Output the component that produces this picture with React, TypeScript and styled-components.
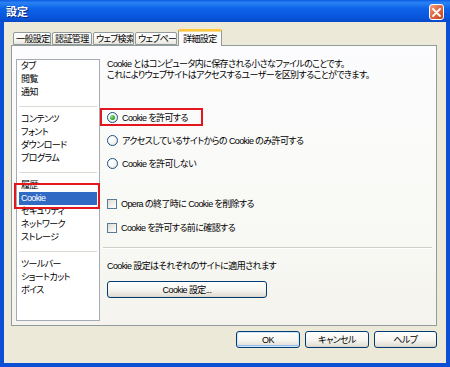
import styled, { createGlobalStyle, css } from "styled-components";

const GlobalStyle = createGlobalStyle`
  html, body {
    margin: 0;
    padding: 0;
    background: #ffffff;
  }
  body {
    font-family: "Liberation Sans", "Noto Sans CJK JP", sans-serif;
    font-feature-settings: "palt";
    letter-spacing: -0.6px;
  }
`;

// red annotation rectangle laid over a part of the dialog
const mark = (t: number, r: number, b: number, l: number) => css`
  position: relative;
  &::after {
    content: "";
    position: absolute;
    top: -${t}px;
    right: -${r}px;
    bottom: -${b}px;
    left: -${l}px;
    border: 2px solid #e3161e;
    pointer-events: none;
    z-index: 5;
  }
`;

const Window = styled.div`
  width: 450px;
  height: 367px;
  display: flex;
  flex-direction: column;
  background: #0a4fd4;
`;

const TitleBar = styled.div`
  height: 22px;
  flex: none;
  display: flex;
  align-items: center;
  justify-content: space-between;
  padding: 0 6px 0 6px;
  background: linear-gradient(#0b5be4 0%, #2a82f4 12%, #0d62e8 40%, #0855dc 80%, #0648c6 100%);
`;

const Title = styled.span`
  color: #ffffff;
  font-family: "Noto Sans CJK JP", sans-serif;
  font-size: 11px;
  font-weight: 700;
  letter-spacing: 0;
  text-shadow: 1px 1px 0 #0a2a7a;
`;

const CloseButton = styled.div`
  width: 13px;
  height: 14px;
  margin-top: 2px;
  border: 1px solid #ffffff;
  border-radius: 3px;
  background: linear-gradient(135deg, #f0a184 0%, #e16a43 45%, #c8411c 100%);
  display: flex;
  align-items: center;
  justify-content: center;
`;

const Client = styled.div`
  flex: 1;
  display: flex;
  flex-direction: column;
  background: #ece9d8;
  border: 4px solid #0a4fd4;
  border-top: none;
  padding: 7px 9px 0 7px;
`;

const TabRow = styled.div`
  height: 16px;
  display: flex;
  align-items: flex-end;
  gap: 1px;
  padding-left: 2px;
  position: relative;
  z-index: 2;
`;

const Tab = styled.div<{ $w: number; $active?: boolean }>`
  width: ${(p) => p.$w}px;
  box-sizing: border-box;
  height: ${(p) => (p.$active ? 17 : 13)}px;
  margin-bottom: ${(p) => (p.$active ? -1 : 0)}px;
  padding-left: 2px;
  display: flex;
  align-items: center;
  overflow: hidden;
  white-space: nowrap;
  font-size: 9px;
  color: #000000;
  border: 1px solid #919b9c;
  border-bottom: ${(p) => (p.$active ? "none" : "1px solid #919b9c")};
  border-radius: 2px 2px 0 0;
  background: ${(p) => (p.$active ? "#fcfcfe" : "linear-gradient(#ffffff, #f3f3ef 70%, #e6e4dc)")};
  ${(p) =>
    p.$active &&
    css`
      border-top: 2px solid #ffc83c;
      box-shadow: inset 0 1px 0 #f8dc8c;
      padding-left: 4px;
      ${mark(7, 5, 3, 3)}
    `}
`;

const Panel = styled.div`
  height: 281px;
  box-sizing: border-box;
  display: flex;
  border: 1px solid #919b9c;
  background: linear-gradient(#fcfcfe, #f8f8f4 70%, #f4f3ee);
  padding: 13px 0 4px 4px;
`;

const List = styled.div`
  width: 84px;
  box-sizing: border-box;
  height: 262px;
  background: #ffffff;
  border: 1px solid #a5acb5;
  padding: 0 2px;
  display: flex;
  flex-direction: column;
`;

const Item = styled.div<{ $selected?: boolean }>`
  height: 13px;
  line-height: 13px;
  padding-left: 2px;
  font-size: 9px;
  white-space: nowrap;
  color: ${(p) => (p.$selected ? "#ffffff" : "#000000")};
  background: ${(p) => (p.$selected ? "#316ac5" : "transparent")};
  ${(p) => p.$selected && mark(9, 3, 4, 5)}
`;

const ListSeparator = styled.div`
  height: 14px;
  display: flex;
  align-items: center;
  &::before {
    content: "";
    flex: 1;
    height: 1px;
    background: #dcdad3;
  }
`;

const Content = styled.div`
  flex: 1;
  display: flex;
  flex-direction: column;
  align-items: flex-start;
  padding: 0 4px 0 7px;
`;

const Description = styled.p`
  margin: 0;
  font-size: 9px;
  line-height: 11px;
  color: #000000;
`;

const OptionRow = styled.label<{ $gap: number; $marked?: boolean }>`
  display: inline-flex;
  align-items: center;
  gap: 4px;
  height: 13px;
  margin-top: ${(p) => p.$gap}px;
  font-size: 9px;
  color: #000000;
  white-space: nowrap;
  ${(p) => p.$marked && mark(3, 15, 2, 7)}
`;

const Radio = styled.span<{ $checked?: boolean }>`
  width: 11px;
  height: 11px;
  box-sizing: border-box;
  border-radius: 50%;
  border: 1px solid #1c5180;
  background: radial-gradient(circle at 35% 35%, #ffffff 30%, #dcdad2 100%);
  display: flex;
  align-items: center;
  justify-content: center;
  &::after {
    content: "";
    display: ${(p) => (p.$checked ? "block" : "none")};
    width: 5px;
    height: 5px;
    border-radius: 50%;
    background: radial-gradient(circle at 35% 35%, #8fe08f, #21a121 70%);
  }
`;

const Check = styled.span`
  width: 10px;
  height: 10px;
  box-sizing: border-box;
  border: 1px solid #5a7a98;
  background: linear-gradient(135deg, #dcdcd7, #ffffff);
`;

const Divider = styled.div`
  align-self: stretch;
  height: 1px;
  margin: 13px 0 0 -4px;
  background: #d0cec6;
  box-shadow: 0 1px 0 #ffffff;
`;

const Note = styled.p`
  margin: 13px 0 0 0;
  font-size: 9px;
  line-height: 11px;
  color: #000000;
`;

const XpButton = styled.button<{ $w: number; $default?: boolean }>`
  width: ${(p) => p.$w}px;
  height: 17px;
  padding: 0;
  font-family: "Liberation Sans", "Noto Sans CJK JP", sans-serif;
  font-feature-settings: "palt";
  letter-spacing: -0.6px;
  font-size: 9px;
  color: #000000;
  border: 1px solid #003c74;
  border-radius: 3px;
  background: linear-gradient(#ffffff, #f5f4ef 55%, #e4e1d8 90%, #d6d0c5);
  box-shadow: ${(p) =>
    p.$default ? "inset 0 0 0 1px #cee7ff, inset 0 -1px 0 1px #98b8ea" : "none"};
`;

const SettingsButton = styled(XpButton)`
  margin-top: 9px;
`;

const Footer = styled.div`
  display: flex;
  justify-content: flex-end;
  gap: 5px;
  padding-top: 5px;
`;

const groups: string[][] = [
  ["タブ", "閲覧", "通知"],
  ["コンテンツ", "フォント", "ダウンロード", "プログラム"],
  ["履歴", "Cookie", "セキュリティ", "ネットワーク", "ストレージ"],
  ["ツールバー", "ショートカット", "ボイス"],
];

const tabs = [
  { label: "一般設定", w: 38 },
  { label: "認証管理", w: 40 },
  { label: "ウェブ検索", w: 41 },
  { label: "ウェブページ", w: 42 },
  { label: "詳細設定", w: 44, active: true },
];

const App = () => {
  return (
    <>
      <GlobalStyle />
      <Window>
        <TitleBar>
          <Title>設定</Title>
          <CloseButton>
            <svg width="9" height="9" viewBox="0 0 9 9">
              <path d="M1 1 L8 8 M8 1 L1 8" stroke="#ffffff" strokeWidth="1.8" strokeLinecap="round" />
            </svg>
          </CloseButton>
        </TitleBar>
        <Client>
          <TabRow>
            {tabs.map((t) => (
              <Tab key={t.label} $w={t.w} $active={t.active}>
                {t.label}
              </Tab>
            ))}
          </TabRow>
          <Panel>
            <List>
              {groups.map((g, i) => (
                <div key={i}>
                  {i > 0 && <ListSeparator />}
                  {g.map((name) => (
                    <Item key={name} $selected={name === "Cookie"}>
                      {name}
                    </Item>
                  ))}
                </div>
              ))}
            </List>
            <Content>
              <Description>
                Cookie とはコンピュータ内に保存される小さなファイルのことです。
                <br />
                これによりウェブサイトはアクセスするユーザーを区別することができます。
              </Description>
              <OptionRow $gap={30} $marked>
                <Radio $checked />
                Cookie を許可する
              </OptionRow>
              <OptionRow $gap={10}>
                <Radio />
                アクセスしているサイトからの Cookie のみ許可する
              </OptionRow>
              <OptionRow $gap={10}>
                <Radio />
                Cookie を許可しない
              </OptionRow>
              <OptionRow $gap={27}>
                <Check />
                Opera の終了時に Cookie を削除する
              </OptionRow>
              <OptionRow $gap={11}>
                <Check />
                Cookie を許可する前に確認する
              </OptionRow>
              <Divider />
              <Note>Cookie 設定はそれぞれのサイトに適用されます</Note>
              <SettingsButton $w={160}>Cookie 設定...</SettingsButton>
            </Content>
          </Panel>
          <Footer>
            <XpButton $w={64} $default>
              OK
            </XpButton>
            <XpButton $w={64}>キャンセル</XpButton>
            <XpButton $w={63}>ヘルプ</XpButton>
          </Footer>
        </Client>
      </Window>
    </>
  );
};

export default App;
